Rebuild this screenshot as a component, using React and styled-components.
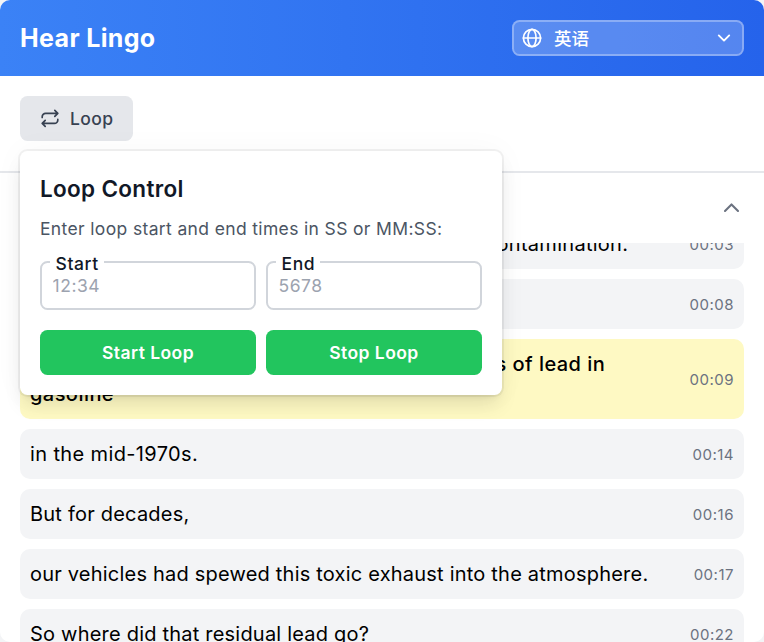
import React from 'react';
import styled, { createGlobalStyle } from 'styled-components';

const Global = createGlobalStyle`
  *, *::before, *::after { box-sizing: border-box; }
  html, body { margin: 0; height: 100%; overflow: hidden; background: #f3f4f6; }
  body { font-family: Inter, "Noto Sans CJK SC", sans-serif; color: #000; -webkit-font-smoothing: antialiased; }
  button, input { font: inherit; letter-spacing: inherit; }
`;

const Panel = styled.div`
  width: 764px;
  height: 642px;
  display: flex;
  flex-direction: column;
  overflow: hidden;
  border-radius: 10px;
  background: #fff;
`;

const Header = styled.header`
  height: 76px;
  flex: none;
  display: flex;
  align-items: center;
  justify-content: space-between;
  padding: 0 20px;
  background: linear-gradient(to right, #3b82f6, #2563eb);
  color: #fff;
`;

const Title = styled.h1`
  margin: 0;
  font-size: 25px;
  line-height: 35px;
  font-weight: 700;
  letter-spacing: 0.35px;
`;

const LanguageSelect = styled.button`
  width: 232px;
  height: 36px;
  display: flex;
  align-items: center;
  padding: 0 10px 0 8px;
  border: 2px solid rgba(255, 255, 255, 0.3);
  border-radius: 7.5px;
  background: rgba(255, 255, 255, 0.22);
  color: #fff;
  font-size: 17.5px;
  line-height: 25px;
`;

const LanguageName = styled.span`
  flex: 1;
  margin-left: 12px;
  text-align: left;
  font-weight: 500;
`;

const Toolbar = styled.div`
  position: relative;
  z-index: 2;
  height: 97px;
  flex: none;
  padding: 20px;
  border-bottom: 2px solid #e5e7eb;
`;

const LoopButton = styled.button`
  width: 113px;
  height: 45px;
  display: flex;
  align-items: center;
  gap: 10px;
  padding: 0 20px;
  border: 0;
  border-radius: 7.5px;
  background: #e5e7eb;
  color: #374151;
  font-size: 17.5px;
  font-weight: 500;
  letter-spacing: 0.4px;
`;

const Popover = styled.section`
  position: absolute;
  top: 75px;
  left: 20px;
  width: 482px;
  height: 244px;
  padding: 20px;
  border-radius: 7.5px;
  background: #fff;
  box-shadow: 0 0 0 2px rgba(0, 0, 0, 0.05), 0 12.5px 18.75px -3.75px rgba(0, 0, 0, 0.1), 0 5px 7.5px -5px rgba(0, 0, 0, 0.1), 0 0 32px rgba(0, 0, 0, 0.035);
  letter-spacing: 0.4375px;
`;

const PopoverTitle = styled.h2`
  margin: 0;
  font-size: 22.5px;
  line-height: 35px;
  font-weight: 600;
  letter-spacing: 0.32px;
  color: #111827;
`;

const Hint = styled.p`
  margin: 10px 0 0;
  font-size: 17.5px;
  line-height: 25px;
  letter-spacing: 0.355px;
  color: #4b5563;
`;

const PairGrid = styled.div`
  display: grid;
  grid-template-columns: 1fr 1fr;
  gap: 10px;
  margin-top: 20px;
`;

const Field = styled.fieldset`
  position: relative;
  height: 49px;
  min-width: 0;
  margin: 0;
  padding: 0;
  border: 2px solid #d1d5db;
  border-radius: 7.5px;
`;

const FieldLabel = styled.label`
  position: absolute;
  top: -12px;
  left: 8px;
  padding: 0 5px 0 5.5px;
  background: #fff;
  color: #111827;
  font-size: 17.5px;
  line-height: 25px;
  font-weight: 500;
  letter-spacing: 0.6px;
`;

const TimeInput = styled.input`
  display: block;
  width: 100%;
  height: 45px;
  padding: 0 10.5px;
  border: 0;
  outline: 0;
  background: transparent;
  font-size: 17.5px;
  letter-spacing: 0.55px;
  &::placeholder { color: #9ca3af; opacity: 1; }
`;

const ActionButton = styled.button`
  height: 45px;
  padding: 0;
  border: 0;
  border-radius: 7.5px;
  background: #22c55e;
  color: #fff;
  font-size: 17.5px;
  font-weight: 600;
`;

const CollapseBar = styled.div`
  height: 70px;
  flex: none;
  display: flex;
  align-items: center;
  justify-content: flex-end;
  padding: 0 20px;
  color: #6b7280;
`;

const Transcript = styled.div`
  flex: 1;
  min-height: 0;
  overflow: hidden;
  padding: 0 20px;
`;

const Lines = styled.div`
  display: flex;
  flex-direction: column;
  gap: 10px;
  margin-top: -24px;
`;

const Line = styled.div`
  display: flex;
  flex: none;
  align-items: center;
  justify-content: space-between;
  padding: 10px;
  border-radius: 10px;
  background: ${p => (p.$active ? '#fef9c3' : '#f3f4f6')};
  font-weight: ${p => (p.$active ? 500 : 400)};
`;

const LineText = styled.span`
  font-size: 20px;
  line-height: 30px;
  letter-spacing: ${p => p.$tracking ?? 0.21}px;
  white-space: pre;
`;

const Stamp = styled.time`
  padding-top: 2px;
  color: #6b7280;
  font-size: 15px;
  line-height: 20px;
  font-weight: 400;
  letter-spacing: 0.5px;
`;

const Icon = styled.svg`
  flex: none;
  fill: none;
  stroke: currentColor;
  stroke-width: ${p => p.$weight || 1.5};
  stroke-linecap: round;
  stroke-linejoin: round;
`;

const Globe = () => (
  <Icon width="20" height="20" viewBox="0 0 20 20" $weight={1.7}>
    <circle cx="10" cy="10" r="8.6" />
    <ellipse cx="10" cy="10" rx="4.1" ry="8.6" />
    <path d="M1.4 10h17.2" />
  </Icon>
);

const ChevronDown = () => (
  <Icon width="16" height="16" viewBox="0 0 16 16" $weight={1.9}>
    <path d="m2.8 5.4 5.2 5.2 5.2-5.2" />
  </Icon>
);

const ChevronUp = () => (
  <Icon width="25" height="25" viewBox="0 0 25 25" $weight={2.1}>
    <path d="m6 14.9 6.5-6.5 6.5 6.5" />
  </Icon>
);

const Repeat = () => (
  <Icon width="20" height="20" viewBox="0 0 20 20" $weight={1.7}>
    <path d="m14.8 1.4 3 3-3 3M17.3 4.4H5.6A3.4 3.4 0 0 0 2.2 7.8v.6" />
    <path d="m5.2 11.4-3 3 3 3M2.7 14.4h11.7a3.4 3.4 0 0 0 3.4-3.4v-.6" />
  </Icon>
);

const lines = [
  { text: 'Scientists had to locate the source of this lead contamination.', time: '00:03', tracking: 0.275 },
  { text: 'It was gasoline.', time: '00:08' },
  { text: 'Countries gradually started to restrict the levels of lead in\ngasoline', time: '00:09', active: true, tracking: 0.45 },
  { text: 'in the mid-1970s.', time: '00:14', tracking: 0.37 },
  { text: 'But for decades,', time: '00:16' },
  { text: 'our vehicles had spewed this toxic exhaust into the atmosphere.', time: '00:17' },
  { text: 'So where did that residual lead go?', time: '00:22' },
];

const TimeField = ({ id, label, placeholder }) => (
  <Field>
    <FieldLabel htmlFor={id}>{label}</FieldLabel>
    <TimeInput id={id} placeholder={placeholder} />
  </Field>
);

export default function App() {
  return (
    <>
      <Global />
      <Panel>
        <Header>
          <Title>Hear Lingo</Title>
          <LanguageSelect>
            <Globe />
            <LanguageName>英语</LanguageName>
            <ChevronDown />
          </LanguageSelect>
        </Header>
        <Toolbar>
          <LoopButton><Repeat />Loop</LoopButton>
          <Popover>
            <PopoverTitle>Loop Control</PopoverTitle>
            <Hint>Enter loop start and end times in SS or MM:SS:</Hint>
            <PairGrid>
              <TimeField id="start" label="Start" placeholder="12:34" />
              <TimeField id="end" label="End" placeholder="5678" />
            </PairGrid>
            <PairGrid>
              <ActionButton>Start Loop</ActionButton>
              <ActionButton>Stop Loop</ActionButton>
            </PairGrid>
          </Popover>
        </Toolbar>
        <CollapseBar><ChevronUp /></CollapseBar>
        <Transcript>
          <Lines>
            {lines.map(line => (
              <Line key={line.time} $active={line.active}>
                <LineText $tracking={line.tracking}>{line.text}</LineText>
                <Stamp>{line.time}</Stamp>
              </Line>
            ))}
          </Lines>
        </Transcript>
      </Panel>
    </>
  );
}
